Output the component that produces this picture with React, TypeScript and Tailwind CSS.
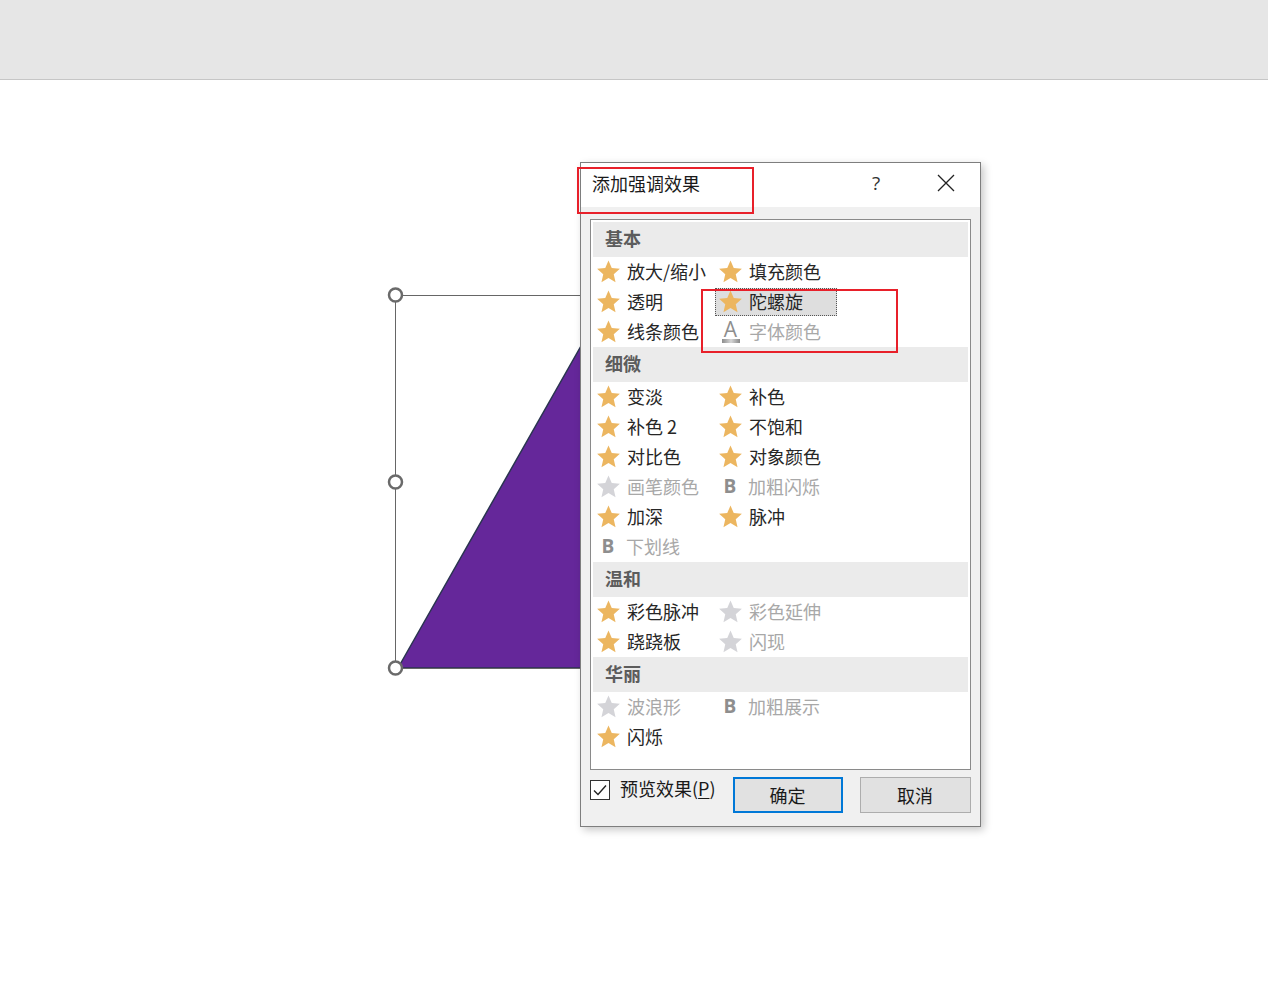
import React from "react";

type Icon = "star" | "b" | "a";

interface Effect {
  name: string;
  icon: Icon;
  disabled?: boolean;
  selected?: boolean;
}

interface Group {
  title: string;
  items: Effect[];
}

const groups: Group[] = [
  {
    title: "基本",
    items: [
      { name: "放大/缩小", icon: "star" },
      { name: "填充颜色", icon: "star" },
      { name: "透明", icon: "star" },
      { name: "陀螺旋", icon: "star", selected: true },
      { name: "线条颜色", icon: "star" },
      { name: "字体颜色", icon: "a", disabled: true },
    ],
  },
  {
    title: "细微",
    items: [
      { name: "变淡", icon: "star" },
      { name: "补色", icon: "star" },
      { name: "补色 2", icon: "star" },
      { name: "不饱和", icon: "star" },
      { name: "对比色", icon: "star" },
      { name: "对象颜色", icon: "star" },
      { name: "画笔颜色", icon: "star", disabled: true },
      { name: "加粗闪烁", icon: "b", disabled: true },
      { name: "加深", icon: "star" },
      { name: "脉冲", icon: "star" },
      { name: "下划线", icon: "b", disabled: true },
    ],
  },
  {
    title: "温和",
    items: [
      { name: "彩色脉冲", icon: "star" },
      { name: "彩色延伸", icon: "star", disabled: true },
      { name: "跷跷板", icon: "star" },
      { name: "闪现", icon: "star", disabled: true },
    ],
  },
  {
    title: "华丽",
    items: [
      { name: "波浪形", icon: "star", disabled: true },
      { name: "加粗展示", icon: "b", disabled: true },
      { name: "闪烁", icon: "star" },
    ],
  },
];

const cjk = { fontFamily: '"Noto Sans CJK SC", "Noto Sans", sans-serif' };
const latin = { fontFamily: '"Open Sans", "DejaVu Sans", sans-serif' };

function EffectIcon({ icon, disabled }: { icon: Icon; disabled?: boolean }) {
  if (icon === "b") {
    return (
      <span className="w-[24px] text-center text-[19px] font-bold leading-none text-[#8e8e8e]" style={latin}>
        B
      </span>
    );
  }
  if (icon === "a") {
    return (
      <span className="flex w-[25px] flex-col items-center pt-[1px]">
        <span className="text-[21px] leading-[18px] text-[#8e8e8e]" style={latin}>
          A
        </span>
        <span className="mt-[1px] h-[4px] w-[18px] bg-gradient-to-r from-[#8c8c8c] via-[#d6d6d6] to-[#8a8a8a]" />
      </span>
    );
  }
  return (
    <svg width="25" height="25" viewBox="0 0 24 24">
      <path
        d="M12 1.5L15.12 8.71L22.94 9.45L17.04 14.64L18.76 22.3L12 18.3L5.24 22.3L6.96 14.64L1.06 9.45L8.88 8.71Z"
        fill={disabled ? "#d4d4d8" : "#ecb660"}
      />
    </svg>
  );
}

function EffectCell({ item }: { item: Effect }) {
  return (
    <div
      className={`my-[1px] flex h-[28px] items-center gap-[6px] pb-[2px] pl-[2px] ${
        item.selected ? "border border-dotted border-[#555] bg-[#dedede]" : "border border-transparent"
      }`}
    >
      <EffectIcon icon={item.icon} disabled={item.disabled} />
      <span
        className={`whitespace-nowrap text-[18px] leading-none ${
          item.disabled ? "text-[#a8a8a8]" : "text-[#262626]"
        }`}
      >
        {item.name}
      </span>
    </div>
  );
}

function Shape() {
  return (
    <svg className="absolute left-0 top-0" width="1268" height="982" viewBox="0 0 1268 982">
      <polygon points="398,668 610,295 822,668" fill="#65279a" stroke="#2a3550" strokeWidth="1.5" />
      <rect x="395.5" y="295.5" width="430" height="373" fill="none" stroke="#666" strokeWidth="1" />
      {[295, 482, 668].map((cy) => (
        <circle key={cy} cx="395.5" cy={cy} r="6.5" fill="#fff" stroke="#6a6a6a" strokeWidth="2.5" />
      ))}
    </svg>
  );
}

export default function App() {
  return (
    <div className="relative h-[982px] w-[1268px] overflow-hidden bg-white" style={cjk}>
      <div className="h-[80px] border-b border-[#c6c6c6] bg-[#e6e6e6]" />
      <Shape />

      <div className="absolute left-[580px] top-[162px] flex h-[665px] w-[401px] flex-col border border-[#7e7e7e] bg-[#f0f0f0] shadow-[3px_3px_8px_rgba(0,0,0,0.22)]">
        <div className="flex h-[44px] items-center bg-white pb-[4px] pl-[11px]">
          <span className="flex-1 text-[18px] leading-none text-[#1a1a1a]">添加强调效果</span>
          <span className="w-[24px] text-center text-[19px] leading-none text-[#333]" style={latin}>
            ?
          </span>
          <span className="ml-[48px] mr-[24px] flex h-[20px] w-[20px] items-center justify-center">
            <svg width="18" height="18" viewBox="0 0 18 18">
              <path d="M1 1L17 17M17 1L1 17" stroke="#222" strokeWidth="1.3" />
            </svg>
          </span>
        </div>

        <div className="px-[9px] pt-[12px]">
          <div className="flex h-[551px] flex-col border border-[#8a8a8a] bg-white px-[2px] pt-[2px]">
            {groups.map((g) => (
              <div key={g.title}>
                <div className="flex h-[35px] items-center bg-[#ebebeb] pb-[3px] pl-[12px] text-[18px] font-bold leading-none text-[#5c5c5c]">
                  {g.title}
                </div>
                <div className="grid grid-cols-[122px_122px]">
                  {g.items.map((it) => (
                    <EffectCell key={it.name} item={it} />
                  ))}
                </div>
              </div>
            ))}
          </div>
        </div>

        <div className="flex items-start px-[9px] pt-[7px]">
          <div className="mt-[3px] flex h-[20px] w-[20px] items-center justify-center border border-[#333] bg-white">
            <svg width="14" height="12" viewBox="0 0 14 12">
              <path d="M1 6.5L5 10.5L13 1.5" fill="none" stroke="#222" strokeWidth="1.4" />
            </svg>
          </div>
          <span className="ml-[10px] mt-[2px] text-[18px] leading-none text-[#1a1a1a]">
            预览效果(<span className="underline underline-offset-2">P</span>)
          </span>
          <button className="ml-[17px] flex h-[36px] w-[110px] items-center justify-center border-2 border-[#0078d7] bg-[#e1e1e1] text-[18px] leading-none text-[#1a1a1a]">
            确定
          </button>
          <button className="ml-[17px] flex h-[36px] w-[111px] items-center justify-center border border-[#adadad] bg-[#e1e1e1] text-[18px] leading-none text-[#1a1a1a]">
            取消
          </button>
        </div>
      </div>

      <div className="absolute left-[577px] top-[167px] h-[47px] w-[177px] border-2 border-[#e8202a]" />
      <div className="absolute left-[701px] top-[289px] h-[64px] w-[197px] border-2 border-[#e8202a]" />
    </div>
  );
}
